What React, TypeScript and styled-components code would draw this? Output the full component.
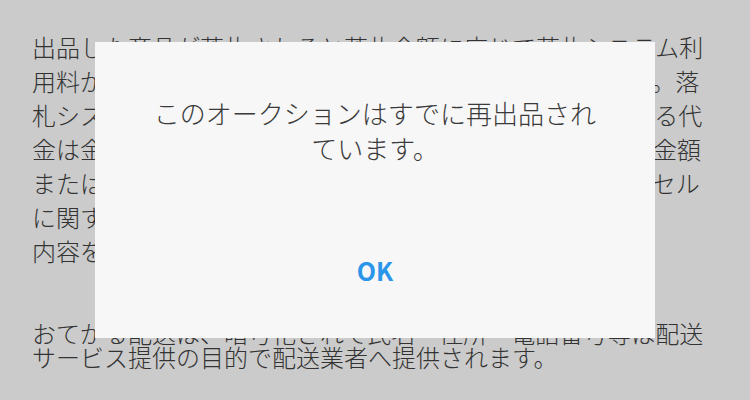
import styled, { createGlobalStyle } from "styled-components";

const GlobalStyle = createGlobalStyle`
  html, body {
    margin: 0;
    padding: 0;
    background: #cbcbcb;
  }
  body {
    font-family: "Noto Sans CJK JP", "Noto Sans", sans-serif;
  }
`;

const Page = styled.div`
  width: 750px;
  height: 400px;
  overflow: hidden;
  background: #cbcbcb;
  color: #333333;
  padding: 30px 0 0 32px;
  box-sizing: border-box;
`;

const Paragraph = styled.p<{ $lineHeight: number; $gap?: number }>`
  width: 672px;
  margin: ${(p) => p.$gap ?? 0}px 0 0;
  font-size: 24px;
  font-weight: 300;
  line-height: ${(p) => p.$lineHeight}px;
  word-break: break-all;
`;

const Overlay = styled.div`
  position: fixed;
  inset: 0;
  display: flex;
  justify-content: center;
  align-items: flex-start;
  padding-top: 42px;
`;

const Dialog = styled.div`
  width: 560px;
  height: 296px;
  background: #f7f7f7;
  display: flex;
  flex-direction: column;
  align-items: center;
  padding-top: 53px;
  box-sizing: border-box;
`;

const Message = styled.div`
  width: 460px;
  font-size: 26px;
  font-weight: 300;
  line-height: 35px;
  color: #3a3a3a;
  text-align: center;
`;

const OkButton = styled.button`
  margin-top: 80px;
  height: 50px;
  padding: 0 30px;
  border: none;
  background: transparent;
  font-family: "Noto Sans CJK JP", "Noto Sans", sans-serif;
  font-size: 25px;
  font-weight: 700;
  color: #2b95e9;
  cursor: pointer;
`;

const App = () => {
  return (
    <>
      <GlobalStyle />
      <Page>
        <Paragraph $lineHeight={34}>
          出品した商品が落札されると落札金額に応じて落札システム利用料がかかります、料率は出品カテゴリにより異なります。落札システム利用料は、落札金額の割合で、出品者が受け取る代金は金額から利用料を差し引いた額となります。落札後の金額または取引状況によって変わります。落札者都合のキャンセルに関する利用料の返還はヘルプをご確認ください。
          <br />
          内容をよくご確認のうえ出品してください。
        </Paragraph>
        <Paragraph $lineHeight={24} $gap={53}>
          おてがる配送は、暗号化されて氏名・住所・電話番号等は配送サービス提供の目的で配送業者へ提供されます。
        </Paragraph>
      </Page>
      <Overlay>
        <Dialog>
          <Message>このオークションはすでに再出品されています。</Message>
          <OkButton>OK</OkButton>
        </Dialog>
      </Overlay>
    </>
  );
};

export default App;
